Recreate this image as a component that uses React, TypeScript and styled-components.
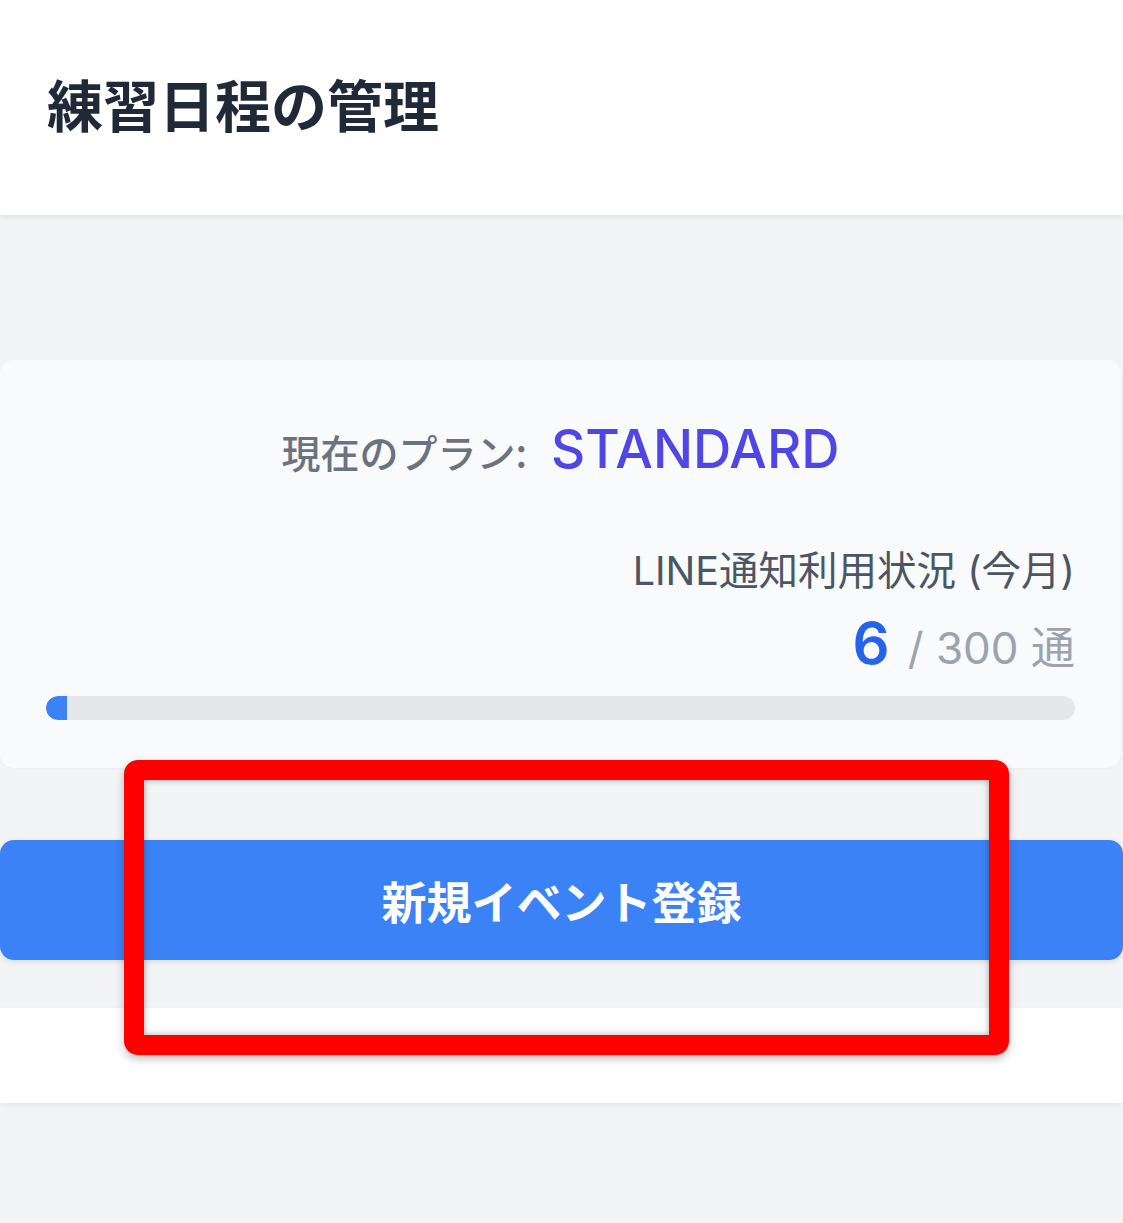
import React, { FC } from "react";
import styled, { createGlobalStyle } from "styled-components";

const GlobalStyle = createGlobalStyle`
  html, body {
    margin: 0;
    padding: 0;
    background: #f3f4f6;
  }
  body {
    font-family: Inter, "Noto Sans CJK JP", "Noto Sans", sans-serif;
    -webkit-font-smoothing: antialiased;
  }
`;

const PageEl = styled.div`
  position: relative;
  width: 1123px;
  min-height: 1223px;
  background: #f3f4f6;
  overflow: hidden;
`;

const HeaderEl = styled.header`
  height: 215px;
  background: #ffffff;
  display: flex;
  align-items: center;
  padding: 0 47px 10px;
  box-sizing: border-box;
  box-shadow: 0 2px 6px rgba(0, 0, 0, 0.08);
  position: relative;
  z-index: 1;
`;

const TitleEl = styled.h1`
  margin: 0;
  font-family: "Noto Sans CJK JP", sans-serif;
  font-size: 56px;
  font-weight: 700;
  color: #1f2937;
  line-height: 1;
`;

const MainEl = styled.main`
  width: 1121px;
  padding-top: 145px;
  display: flex;
  flex-direction: column;
`;

const CardEl = styled.section`
  background: #f9fafb;
  border-radius: 14px;
  padding: 57px 46px 48px;
  display: flex;
  flex-direction: column;
  box-shadow: 0 1px 2px rgba(0, 0, 0, 0.03);
`;

const PlanRowEl = styled.div`
  display: flex;
  justify-content: center;
  align-items: baseline;
  gap: 24px;
  height: 64px;
  line-height: 64px;
`;

const PlanLabelEl = styled.span`
  font-family: "Noto Sans CJK JP", sans-serif;
  font-size: 39px;
  font-weight: 500;
  color: #6b7280;
`;

const PlanNameEl = styled.span`
  font-family: Inter, sans-serif;
  font-size: 53px;
  font-weight: 500;
  color: #4f46e5;
`;

const UsageLabelEl = styled.div`
  margin-top: 66px;
  text-align: right;
  font-family: Inter, "Noto Sans CJK JP", sans-serif;
  font-size: 39.5px;
  line-height: 48px;
  color: #4b5563;
`;

const UsageCountEl = styled.div`
  margin-top: 16px;
  display: flex;
  justify-content: flex-end;
  align-items: baseline;
  gap: 18px;
  height: 64px;
  line-height: 64px;
`;

const CountEl = styled.span`
  font-family: Inter, sans-serif;
  font-size: 58px;
  font-weight: 600;
  color: #2563eb;
`;

const LimitEl = styled.span`
  font-family: Inter, "Noto Sans CJK JP", sans-serif;
  font-size: 44px;
  color: #9ca3af;
`;

const BarTrackEl = styled.div`
  margin-top: 21px;
  height: 24px;
  border-radius: 12px;
  background: #e5e7eb;
  overflow: hidden;
`;

const BarFillEl = styled.div`
  height: 100%;
  background: #3b82f6;
  border-radius: 12px 0 0 12px;
`;

const PrimaryButtonEl = styled.button`
  margin-top: 72px;
  height: 120px;
  width: 1123px;
  border: none;
  border-radius: 14px;
  background: #3b82f6;
  color: #ffffff;
  font-family: "Noto Sans CJK JP", sans-serif;
  font-size: 45px;
  font-weight: 700;
  box-shadow: 0 2px 6px rgba(0, 0, 0, 0.1);
  cursor: pointer;
`;

const FooterBandEl = styled.div`
  margin-top: 48px;
  width: 1123px;
  height: 95px;
  background: #ffffff;
  box-shadow: 0 2px 6px rgba(0, 0, 0, 0.06);
`;

const HighlightEl = styled.div`
  position: absolute;
  left: 124px;
  top: 760px;
  width: 885px;
  height: 295px;
  box-sizing: border-box;
  border: 20px solid #ff0000;
  border-radius: 14px;
  box-shadow: 0 4px 8px rgba(0, 0, 0, 0.25), inset 0 0 6px rgba(0, 0, 0, 0.35);
  pointer-events: none;
  z-index: 2;
`;

const used = 6;
const limit = 300;

const App: FC = () => {
  const ratio = Math.max((used / limit) * 100, 2);
  return (
    <PageEl>
      <GlobalStyle />
      <HeaderEl>
        <TitleEl>練習日程の管理</TitleEl>
      </HeaderEl>
      <MainEl>
        <CardEl>
          <PlanRowEl>
            <PlanLabelEl>現在のプラン:</PlanLabelEl>
            <PlanNameEl>STANDARD</PlanNameEl>
          </PlanRowEl>
          <UsageLabelEl>LINE通知利用状況 (今月)</UsageLabelEl>
          <UsageCountEl>
            <CountEl>{used}</CountEl>
            <LimitEl>/ {limit} 通</LimitEl>
          </UsageCountEl>
          <BarTrackEl>
            <BarFillEl style={{ width: `${ratio}%` }} />
          </BarTrackEl>
        </CardEl>
        <PrimaryButtonEl>新規イベント登録</PrimaryButtonEl>
        <FooterBandEl />
      </MainEl>
      <HighlightEl />
    </PageEl>
  );
};

export default App;
